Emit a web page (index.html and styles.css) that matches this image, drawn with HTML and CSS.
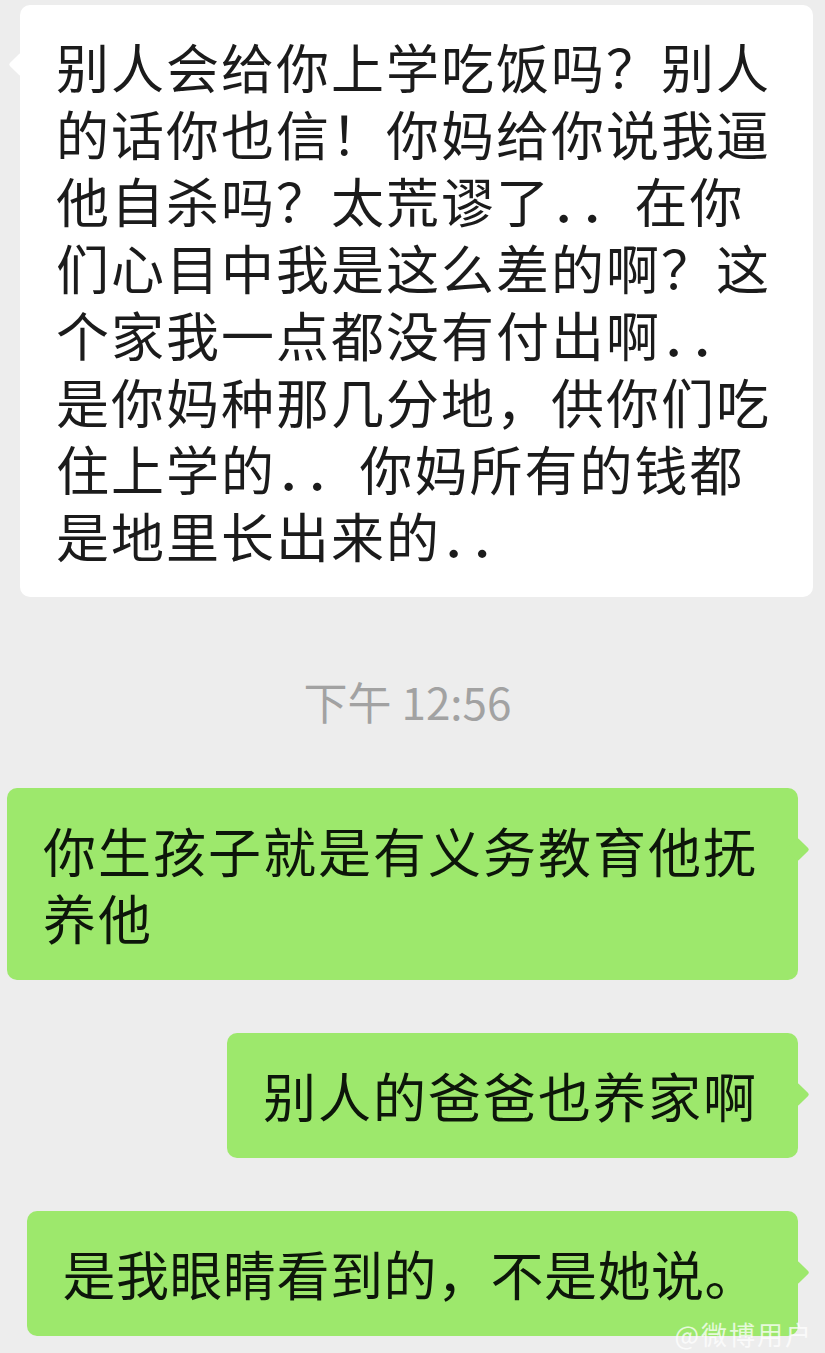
FILE: index.html
```html
<!DOCTYPE html>
<html lang="zh-CN">
<head>
<meta charset="utf-8">
<title>聊天记录</title>
<link rel="stylesheet" href="styles.css">
</head>
<body>
<div class="chat">
  <div class="row row-left">
    <div class="bubble bubble-white">别人会给你上学吃饭吗？别人<br>的话你也信！你妈给你说我逼<br>他自杀吗？太荒谬了．．在你<br>们心目中我是这么差的啊？这<br>个家我一点都没有付出啊．．<br>是你妈种那几分地，供你们吃<br>住上学的．．你妈所有的钱都<br>是地里长出来的．．</div>
  </div>
  <div class="time">下午 12:56</div>
  <div class="row row-right">
    <div class="bubble bubble-green">你生孩子就是有义务教育他抚<br>养他</div>
  </div>
  <div class="row row-right">
    <div class="bubble bubble-green">别人的爸爸也养家啊</div>
  </div>
  <div class="row row-right">
    <div class="bubble bubble-green bubble-tight">是我眼睛看到的，不是她说。</div>
  </div>
  <div class="watermark">@微博用户</div>
</div>
</body>
</html>
```

FILE: styles.css
```css
html, body {
  margin: 0;
  padding: 0;
  background: #ededed;
}

body {
  font-family: "Noto Sans CJK SC", "Noto Sans", sans-serif;
  width: 825px;
  height: 1353px;
  overflow: hidden;
}

.chat {
  position: relative;
  display: flex;
  flex-direction: column;
  padding-top: 5px;
  height: 1348px;
}

.row {
  display: flex;
}

.row-left {
  justify-content: flex-start;
  padding-left: 20px;
}

.row-right {
  justify-content: flex-end;
  padding-right: 27px;
  margin-top: 53px;
}

.time + .row-right {
  margin-top: 57px;
}

.bubble {
  position: relative;
  font-size: 53px;
  line-height: 67px;
  letter-spacing: 2px;
  padding: 29px 40px 29px 36px;
  border-radius: 10px;
  white-space: nowrap;
}

.bubble-white {
  background: #ffffff;
  color: #1b1b1b;
  width: 719px;
  padding: 28px 38px 28px 36px;
}

.bubble-white::before {
  content: "";
  position: absolute;
  left: -8px;
  top: 51px;
  width: 17px;
  height: 17px;
  background: #ffffff;
  border-radius: 2px;
  transform: rotate(45deg);
}

.bubble-green {
  background: #9de86c;
  color: #0d160a;
}

.bubble-green::after {
  content: "";
  position: absolute;
  right: -8px;
  top: 53px;
  width: 17px;
  height: 17px;
  background: #9de86c;
  border-radius: 2px;
  transform: rotate(45deg);
}

.bubble-tight {
  letter-spacing: 0.5px;
}

.time {
  margin-top: 74px;
  text-align: center;
  font-size: 44px;
  line-height: 60px;
  color: #a2a2a2;
  padding-right: 10px;
}

.watermark {
  position: absolute;
  right: 12px;
  bottom: 4px;
  font-size: 26px;
  line-height: 30px;
  color: rgba(255, 255, 255, 0.75);
  letter-spacing: 2px;
}
```
